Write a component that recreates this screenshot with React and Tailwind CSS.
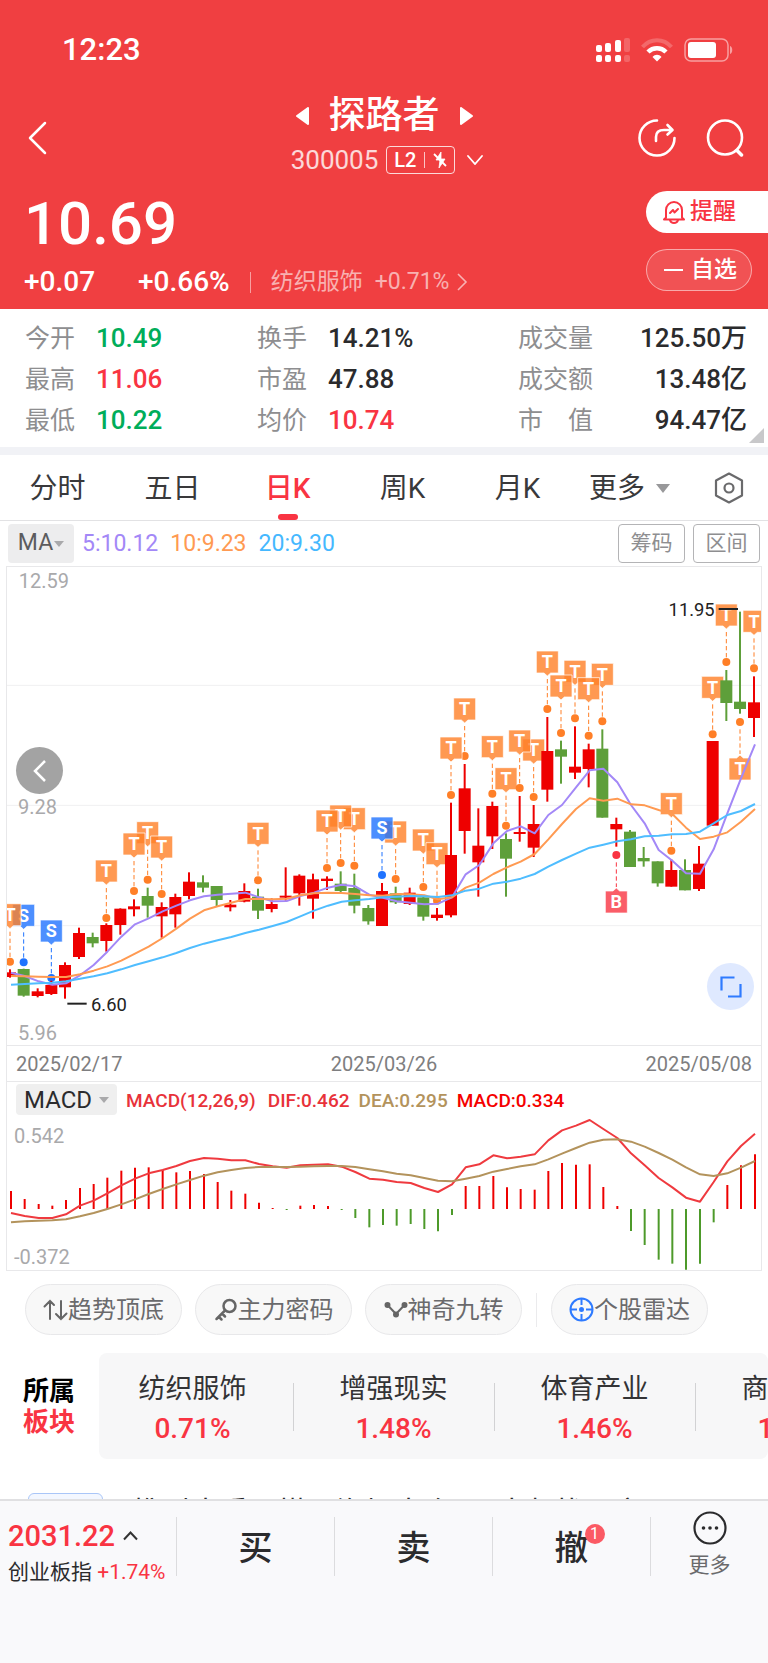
import { useState } from "react";

// Chart units are a third of a pixel. One candle every 41.33 units.
const STEP = 41.33;
const cx = (i) => 30 + STEP * i;

// [high, low, bodyTop, bodyBottom, up]
const CANDLES = [
  [1228, 1253, 1237, 1251, 1], [1226, 1310, 1227, 1307, 0], [1285, 1312, 1294, 1308, 1],
  [1262, 1305, 1275, 1302, 1], [1207, 1316, 1215, 1282, 1], [1103, 1197, 1119, 1191, 1],
  [1118, 1162, 1131, 1150, 0], [1090, 1175, 1095, 1143, 1], [1045, 1124, 1046, 1095, 1],
  [1018, 1069, 1039, 1048, 1], [983, 1073, 1008, 1037, 0], [1027, 1133, 1041, 1069, 1],
  [1001, 1103, 1011, 1063, 1], [937, 1018, 965, 1008, 1], [946, 997, 967, 983, 0],
  [978, 1039, 978, 1020, 0], [1020, 1054, 1034, 1042, 1], [970, 1027, 993, 1025, 1],
  [986, 1077, 1010, 1052, 0], [1015, 1057, 1032, 1047, 1], [922, 1022, 1007, 1013, 1],
  [943, 1037, 947, 1000, 1], [941, 1076, 958, 1016, 1], [949, 990, 956, 963, 1],
  [934, 998, 971, 993, 0], [941, 1060, 984, 1037, 0], [1035, 1094, 1044, 1084, 0],
  [969, 1098, 993, 1098, 1], [980, 1032, 1000, 1027, 0], [983, 1035, 998, 1032, 1],
  [1005, 1082, 1012, 1070, 0], [1044, 1082, 1064, 1074, 1], [728, 1072, 885, 1066, 1],
  [612, 881, 685, 813, 1], [745, 1010, 857, 907, 1], [725, 867, 738, 829, 1],
  [820, 1010, 837, 896, 0], [708, 845, 816, 822, 1], [735, 891, 792, 863, 1],
  [471, 725, 573, 689, 1], [542, 671, 568, 590, 0], [499, 657, 620, 638, 1],
  [551, 682, 568, 627, 1], [508, 773, 566, 773, 0], [773, 860, 792, 808, 1],
  [810, 921, 815, 921, 0], [861, 920, 894, 904, 0], [904, 980, 904, 970, 0],
  [898, 980, 930, 980, 1], [898, 991, 930, 991, 0], [858, 993, 911, 987, 1],
  [543, 797, 543, 797, 1], [330, 483, 361, 429, 0], [155, 461, 425, 447, 0],
  [349, 531, 427, 474, 1],
];

// [candle, kind, dotY, below]
const MARKERS = [
  [1, "S", 1207], [0, "T", 1205], [3, "S", 1254], [7, "T", 1074], [10, "T", 959],
  [9, "T", 993], [11, "T", 1002], [18, "T", 961], [25, "T", 917], [24, "T", 909],
  [23, "T", 924], [28, "T", 957], [27, "S", 945], [30, "T", 981], [31, "T", 1022],
  [33, "T", 588], [32, "T", 705], [35, "T", 701], [36, "T", 797], [38, "T", 711],
  [37, "T", 684], [39, "T", 447], [41, "T", 475], [40, "T", 519], [43, "T", 484],
  [42, "T", 527], [44, "B", 885, true], [48, "T", 872], [51, "T", 523],
  [52, "T", 306], [53, "T", 486, true], [54, "T", 325],
];

const MARKER_COLORS = { T: "#ff7f27", S: "#1f73ff", B: "#f93442" };

const MA5 = [
  1238, 1248, 1264, 1274, 1270, 1246, 1215, 1175, 1130, 1093, 1075, 1054, 1037, 1021, 1009,
  1004, 1001, 998, 1012, 1024, 1023, 1008, 998, 983, 974, 979, 1004, 1013, 1024, 1028, 1033,
  1031, 1012, 943, 915, 850, 813, 799, 820, 765, 735, 682, 631, 626, 667, 735, 790, 870, 902,
  940, 941, 868, 760, 655, 553,
];
const MA10 = [
  1248, 1249, 1250, 1251, 1251, 1243, 1232, 1219, 1202, 1181, 1160, 1134, 1106, 1076, 1051,
  1039, 1028, 1017, 1017, 1018, 1016, 1006, 1000, 998, 999, 1002, 1006, 1007, 1002, 1003,
  1006, 1018, 1012, 983, 968, 942, 922, 905, 882, 838, 792, 747, 715, 722, 716, 733, 736,
  750, 762, 803, 837, 830, 817, 785, 747,
];
const MA20 = [
  1274, 1272, 1270, 1268, 1264, 1256, 1249, 1240, 1228, 1215, 1204, 1192, 1179, 1164, 1151,
  1141, 1131, 1119, 1109, 1098, 1086, 1069, 1052, 1037, 1025, 1021, 1017, 1012, 1010, 1008,
  1009, 1011, 1006, 992, 986, 971, 965, 956, 942, 920, 900, 881, 863, 854, 844, 838, 829,
  827, 823, 822, 815, 790, 765, 753, 732,
];

const MACD_ZERO = 507;
const MACD_BARS = [
  453, 477, 492, 497, 480, 444, 432, 413, 392, 383, 382, 390, 397, 393, 402, 426, 452, 461,
  488, 504, 510, 497, 495, 498, 510, 534, 562, 555, 557, 552, 567, 574, 525, 438, 438, 408,
  442, 447, 449, 393, 369, 374, 373, 441, 498, 573, 615, 659, 671, 689, 671, 547, 435, 376,
  343,
];
const DIF = [
  519, 528, 534, 534, 523, 497, 482, 460, 436, 416, 400, 390, 378, 363, 354, 356, 361, 361,
  372, 379, 383, 376, 374, 373, 380, 396, 416, 419, 426, 429, 444, 456, 433, 382, 373, 346,
  355, 350, 343, 301, 271, 257, 240, 267, 294, 340, 376, 414, 442, 473, 485, 426, 364, 318,
  281,
];
const DEA = [
  547, 544, 542, 541, 538, 529, 519, 507, 493, 478, 462, 447, 433, 420, 407, 397, 390, 384,
  381, 381, 381, 380, 379, 378, 378, 381, 388, 394, 401, 406, 414, 422, 424, 416, 408, 395,
  387, 379, 373, 358, 341, 324, 308, 299, 298, 305, 320, 339, 359, 382, 403, 408, 400, 383,
  363,
];

const line = (ys) => ys.map((y, i) => `${Math.round(cx(i)) + 3},${y}`).join(" ");

function StatusBar() {
  return (
    <div className="flex h-[88px] items-center justify-between pt-3 pr-[34px] pl-[62px]">
      <span className="text-[31px] font-medium">12:23</span>
      <div className="flex items-center gap-[11px]">
        <svg width="34" height="24" viewBox="0 0 34 24" fill="#fff">
          <rect x="0" y="7" width="6" height="7" rx="2" />
          <rect x="9" y="5" width="6" height="9" rx="2" />
          <rect x="19" y="2" width="6" height="12" rx="2" />
          <rect x="28" y="0" width="6" height="14" rx="2" opacity=".2" />
          <rect x="0" y="17" width="6" height="7" rx="2" />
          <rect x="9" y="17" width="6" height="7" rx="2" />
          <rect x="19" y="17" width="6" height="7" rx="2" />
          <rect x="28" y="17" width="6" height="7" rx="2" opacity=".2" />
        </svg>
        <svg width="32" height="24" viewBox="0 0 32 24" fill="none" stroke="#fff">
          <path d="M1.5 9C9.5 0 22.500 0 30.500 9" strokeWidth="4" opacity=".22" />
          <path d="M7 14C12 9 20 9 25 14" strokeWidth="4.5" />
          <path d="M11.500 19C14 16 18 16 20.500 19L16 23.500Z" fill="#fff" stroke="none" />
        </svg>
        <svg width="50" height="24" viewBox="0 0 50 24">
          <rect x="1" y="1" width="43" height="22" rx="6" fill="none" stroke="#fff" strokeWidth="1.5" opacity=".5" />
          <rect x="4" y="4" width="28" height="16" rx="3" fill="#fff" />
          <path d="M46 8c3 1 3 7 0 8z" fill="#fff" opacity=".5" />
        </svg>
      </div>
    </div>
  );
}

function Nav() {
  return (
    <div className="grid h-[92px] grid-cols-[1fr_auto_1fr] items-center px-6 pt-[6px]">
      <button aria-label="返回" className="justify-self-start">
        <svg width="24" height="34" viewBox="0 0 24 34" fill="none" stroke="#fff" strokeWidth="2.5" strokeLinecap="round" strokeLinejoin="round">
          <path d="M21 2L6 17l15 15" />
        </svg>
      </button>
      <div className="flex flex-col items-center">
        <div className="flex h-11 items-center gap-5">
          <button aria-label="上一只">
            <svg width="13" height="18" viewBox="0 0 13 18" fill="#fff" stroke="#fff" strokeWidth="2" strokeLinejoin="round">
              <path d="M1 9L12 1v16z" />
            </svg>
          </button>
          <h1 className="text-[37px] leading-[44px] font-medium">探路者</h1>
          <button aria-label="下一只">
            <svg width="13" height="18" viewBox="0 0 13 18" fill="#fff" stroke="#fff" strokeWidth="2" strokeLinejoin="round">
              <path d="M12 9L1 1v16z" />
            </svg>
          </button>
        </div>
        <div className="flex h-11 items-center pl-[6px]">
          <span className="text-[26px] text-white/80">300005</span>
          <span className="ml-2 flex h-7 w-[69px] items-center justify-center gap-2 rounded border border-white/80 text-[20px] font-medium">
            L2
            <span className="h-4 w-px bg-white/70" />
            <svg width="14" height="18" viewBox="0 0 14 18" fill="none" stroke="#fff" strokeWidth="1.8" strokeLinejoin="round">
              <path d="M8 1L3 9h4l-1 8 6-9H8z" fill="#fff" strokeWidth=".8" />
              <path d="M1 3l12 12" />
            </svg>
          </span>
          <svg className="ml-3" width="16" height="10" viewBox="0 0 16 10" fill="none" stroke="#fff" strokeWidth="1.8" strokeLinecap="round">
            <path d="M1 1l7 8 7-8" />
          </svg>
        </div>
      </div>
      <div className="flex items-center gap-[30px] justify-self-end">
        <button aria-label="分享">
          <svg width="38" height="38" viewBox="0 0 38 38" fill="none" stroke="#fff" strokeWidth="2.6" strokeLinecap="round" strokeLinejoin="round">
            <path d="M19 1.500A17.500 17.500 0 1 0 36.500 19" />
            <path d="M18 22v-4c0-5 3-7 8-7h7M29.500 6l5 5-5 4.500" />
          </svg>
        </button>
        <button aria-label="搜索">
          <svg width="38" height="38" viewBox="0 0 38 38" fill="none" stroke="#fff" strokeWidth="2.6" strokeLinecap="round">
            <circle cx="19" cy="18.5" r="17" />
            <path d="M31 31.500L35.500 36" strokeWidth="3.5" />
          </svg>
        </button>
      </div>
    </div>
  );
}

function PriceBlock() {
  return (
    <div className="flex justify-between pb-[9px] pl-6">
      <div>
        <div className="flex h-[84px] items-center pt-1 text-[60px] font-medium">10.69</div>
        <div className="flex h-9 items-center">
          <span className="w-[114px] text-[28px] font-medium">+0.07</span>
          <span className="text-[28px] font-medium">+0.66%</span>
          <span className="mx-5 h-[21px] w-px bg-white/50" />
          <a href="#sector" className="flex items-center text-[23px] text-white/60">
            纺织服饰
            <span className="ml-3">+0.71%</span>
            <svg className="ml-2" width="11" height="18" viewBox="0 0 11 18" fill="none" stroke="#fff" strokeOpacity=".6" strokeWidth="1.6">
              <path d="M1 1l8 8-8 8" />
            </svg>
          </a>
        </div>
      </div>
      <div className="flex flex-col gap-4 pt-[11px]">
        <button className="flex h-[42px] w-[122px] items-center gap-1 rounded-l-full bg-white pl-4 text-[23px] font-medium text-[#f93442]">
          <svg width="24" height="26" viewBox="0 0 24 26" fill="none" stroke="#f93442" strokeWidth="2" strokeLinejoin="round" strokeLinecap="round">
            <path d="M4 18.500V11a8 8 0 0 1 16 0v7.500l2 2H2z" />
            <path d="M8 21c1 4 7 4 8 0" />
            <path d="M8 14l3-3 1.500 2.500L16 10" />
          </svg>
          提醒
        </button>
        <button className="flex h-[42px] w-[106px] items-center gap-2 rounded-full border border-white/50 bg-white/10 pl-[17px] text-[23px] font-medium">
          <span className="h-0.5 w-[19px] bg-white" />
          自选
        </button>
      </div>
    </div>
  );
}

const STATS = [
  ["今开", "10.49", "text-[#00ad5a]"],
  ["换手", "14.21%", "text-[#2b2b2d]"],
  ["成交量", "125.50万", "text-[#2b2b2d]"],
  ["最高", "11.06", "text-[#f93442]"],
  ["市盈", "47.88", "text-[#2b2b2d]"],
  ["成交额", "13.48亿", "text-[#2b2b2d]"],
  ["最低", "10.22", "text-[#00ad5a]"],
  ["均价", "10.74", "text-[#f93442]"],
  ["市　值", "94.47亿", "text-[#2b2b2d]"],
];

function Stats() {
  return (
    <dl className="relative grid grid-cols-[232px_1fr_229px] pt-[9px] pr-[21px] pb-[6px] pl-[25px] leading-[41px]">
      {STATS.map(([label, value, color], i) => (
        <div key={label} className={i % 3 === 2 ? "flex justify-between" : "flex gap-[21px]"}>
          <dt className="text-[25px] text-[#8e8e90]">{label}</dt>
          <dd className={`text-[26px] font-medium ${color}`}>{value}</dd>
        </div>
      ))}
      <span className="absolute right-1 bottom-1 border-b-[15px] border-l-[15px] border-b-[#c8c8ca] border-l-transparent" />
    </dl>
  );
}

function Tabs() {
  const [active, setActive] = useState("日K");
  return (
    <nav className="grid h-[66px] grid-cols-[repeat(6,115fr)_78fr] border-b border-[#e2e2e4] text-[28px] text-[#39393b]">
      {["分时", "五日", "日K", "周K", "月K", "更多"].map((tab) => (
        <button
          key={tab}
          onClick={() => setActive(tab)}
          className={`relative flex items-center justify-center pt-0.5 ${
            active === tab ? "font-medium text-[#f93442]" : ""
          }`}
        >
          {tab}
          {tab === "更多" && (
            <span className="mr-[6px] ml-[11px] border-x-[7px] border-t-[9px] border-x-transparent border-t-[#98989a]" />
          )}
          {active === tab && (
            <span className="absolute bottom-0 left-1/2 h-1.5 w-5 -translate-x-1/2 rounded-sm bg-[#f93442]" />
          )}
        </button>
      ))}
      <button aria-label="设置" className="flex items-center justify-center">
        <svg width="30" height="32" viewBox="0 0 30 32" fill="none" stroke="#6a6a6c" strokeWidth="2.2" strokeLinejoin="round">
          <path d="M15 1.500L28 8.500v15L15 30.500 2 23.500v-15z" />
          <circle cx="15" cy="16" r="4.5" />
        </svg>
      </button>
    </nav>
  );
}

function Caret() {
  return <span className="border-x-[5px] border-t-[6px] border-x-transparent border-t-[#a9a9ab]" />;
}

function MaBar() {
  return (
    <div className="flex h-[45px] items-center px-2 text-[23px]">
      <button className="flex h-[39px] w-[66px] items-center justify-center gap-px rounded bg-[#ededee] text-[#5c5c5e]">
        MA
        <Caret />
      </button>
      <span className="ml-2 pt-0.5 text-[#a388f7]">5:10.12</span>
      <span className="ml-3 pt-0.5 text-[#ff9a52]">10:9.23</span>
      <span className="ml-3 pt-0.5 text-[#45b8ff]">20:9.30</span>
      <div className="ml-auto flex gap-2 text-[21px] text-[#8e8e90]">
        <button className="h-[39px] w-[67px] rounded border border-[#b4b4b6]">筹码</button>
        <button className="h-[39px] w-[67px] rounded border border-[#b4b4b6]">区间</button>
      </div>
    </div>
  );
}

function Marker({ i, kind, dot, below }) {
  const x = Math.round(cx(i));
  const color = MARKER_COLORS[kind];
  const top = below ? dot + 108 : dot - 174;
  const shape = below
    ? `M${x - 33} ${top}h23l10 -9l10 9h23v66h-66z`
    : `M${x - 33} ${top}h66v66h-23l-10 9l-10 -9h-23z`;
  return (
    <g>
      <line
        x1={x}
        x2={x}
        y1={below ? dot + 22 : top + 84}
        y2={below ? top - 12 : dot - 12}
        stroke={color}
        strokeWidth="3"
        strokeDasharray="13 8"
      />
      <circle cx={x} cy={dot} r="12" fill={color} />
      <path d={shape} fill={color} fillOpacity=".8" stroke="#fff" strokeOpacity=".7" strokeWidth="3" />
      <text x={x} y={top + 52} textAnchor="middle" fontSize="54" fontWeight="700" fill="#fff">
        {kind}
      </text>
    </g>
  );
}

function KChart() {
  return (
    <div className="relative">
      <svg className="block w-full" viewBox="21 21 2262 1434">
        {[376, 736, 1097].map((y) => (
          <line key={y} x1="21" x2="2283" y1={y} y2={y} stroke="#f0f0f1" strokeWidth="3" />
        ))}
        <g fontSize="60" fill="#a9a9ab">
          <text x="56" y="84">12.59</text>
          <text x="54" y="762">9.28</text>
          <text x="54" y="1439">5.96</text>
        </g>
        {MARKERS.map(([i, kind, dot, below]) => (
          <Marker key={i} i={i} kind={kind} dot={dot} below={below} />
        ))}
        {CANDLES.map(([high, low, top, bottom, up], i) => {
          const x = Math.round(cx(i));
          return (
            <g key={i} fill={up ? "#ee0000" : "#5e9f3a"}>
              <rect x={x - 3} y={high} width="6" height={low - high} />
              <rect x={x - 18} y={top} width="36" height={bottom - top} />
            </g>
          );
        })}
        <g fill="none" strokeWidth="6" strokeLinejoin="round">
          <polyline points={line(MA5)} stroke="#a388f7" />
          <polyline points={line(MA10)} stroke="#ff9a52" />
          <polyline points={line(MA20)} stroke="#4fbdff" />
        </g>
        <g stroke="#222" strokeWidth="6">
          <line x1="202" x2="260" y1="1331" y2="1331" />
          <line x1="2156" x2="2214" y1="147" y2="147" />
        </g>
        <g fontSize="55" fill="#222">
          <text x="273" y="1353">6.60</text>
          <text x="2144" y="169" textAnchor="end">11.95</text>
        </g>
      </svg>
      <button
        aria-label="更早"
        className="absolute top-[180px] left-[9px] flex size-[47px] items-center justify-center rounded-full bg-[#a3a3a3]"
      >
        <svg width="14" height="22" viewBox="0 0 14 22" fill="none" stroke="#fff" strokeWidth="2.5">
          <path d="M12 1L2 11l10 10" />
        </svg>
      </button>
      <button
        aria-label="全屏"
        className="absolute right-[7px] bottom-[35px] flex size-[47px] items-center justify-center rounded-full bg-[#dfe9ff]"
      >
        <svg width="22" height="22" viewBox="0 0 22 22" fill="none" stroke="#2f7bff" strokeWidth="2.2">
          <path d="M1.500 14.500v-13h13M20.500 8v12.500H8" />
        </svg>
      </button>
    </div>
  );
}

function MacdChart() {
  return (
    <>
      <div className="flex h-9 items-center border-t border-[#e8e8ea] pl-[9px] text-[19px] font-medium">
        <button className="mr-[9px] flex h-[31px] w-[101px] items-center justify-center gap-[7px] rounded bg-[#efefef] text-[24px] font-normal text-[#2b2b2d]">
          MACD
          <Caret />
        </button>
        <span className="pt-1 text-[#e8323a]">MACD(12,26,9)</span>
        <span className="ml-3 pt-1 text-[#e8323a]">DIF:0.462</span>
        <span className="ml-[9px] pt-1 text-[#b3935c]">DEA:0.295</span>
        <span className="ml-[9px] pt-1 text-[#f50000]">MACD:0.334</span>
      </div>
      <svg className="block w-full" viewBox="21 231 2262 459">
        <g fontSize="60" fill="#a9a9ab">
          <text x="42" y="308">0.542</text>
          <text x="42" y="671">-0.372</text>
        </g>
        {MACD_BARS.map((y, i) => (
          <line
            key={i}
            x1={Math.round(cx(i)) + 3}
            x2={Math.round(cx(i)) + 3}
            y1={MACD_ZERO}
            y2={y}
            stroke={y < MACD_ZERO ? "#ee0000" : "#4d9a2a"}
            strokeWidth="6"
          />
        ))}
        <g fill="none" strokeWidth="6" strokeLinejoin="round">
          <polyline points={line(DIF)} stroke="#ef3a3f" />
          <polyline points={line(DEA)} stroke="#b3935c" />
        </g>
      </svg>
    </>
  );
}

const PILL = "flex h-[51px] w-[157px] items-center justify-center rounded-full border border-[#e8e8ea] bg-[#f8f8f8]";

function Tools() {
  return (
    <div className="flex items-center gap-[13px] pt-[13px] pb-[18px] pl-[25px] text-[24px] text-[#6a6a6c]">
      <button className={PILL}>
        <svg width="25" height="24" viewBox="0 0 25 24" fill="none" stroke="#666" strokeWidth="2" strokeLinecap="round">
          <path d="M7 21V3M1.500 8.500L7 3l4 4M18 3v18M13 16l5 5 5.500-5.500" />
        </svg>
        趋势顶底
      </button>
      <button className={PILL}>
        <svg width="24" height="24" viewBox="0 0 24 24" fill="none" stroke="#666" strokeWidth="2.5" strokeLinecap="round">
          <circle cx="15.5" cy="8" r="6" />
          <path d="M11 12.500L2.500 21M8.500 16l2.500 2.500M5 19l2.500 2.500" />
        </svg>
        主力密码
      </button>
      <button className={PILL}>
        <svg width="24" height="24" viewBox="0 0 24 24" fill="#666" stroke="#666" strokeWidth="2">
          <path d="M3.500 7L12 16l8.500-9" fill="none" />
          <circle cx="3.5" cy="7" r="2" />
          <circle cx="12" cy="16.5" r="2" />
          <circle cx="20.5" cy="7" r="2" />
        </svg>
        神奇九转
      </button>
      <span className="mx-px h-[34px] w-px bg-[#ebebed]" />
      <button className={PILL}>
        <svg width="25" height="25" viewBox="0 0 25 25" fill="none" stroke="#2f7bff" strokeWidth="2">
          <circle cx="12.5" cy="12.5" r="11" />
          <path d="M12.500 1v7M12.500 17v7M1 12.500h7M17 12.500h7" />
          <circle cx="12.5" cy="12.5" r="1.5" fill="#2f7bff" />
        </svg>
        个股雷达
      </button>
    </div>
  );
}

const SECTORS = [
  ["纺织服饰", "0.71%"],
  ["增强现实", "1.48%"],
  ["体育产业", "1.46%"],
  ["商业百货", "1.35%"],
];

function Sectors() {
  return (
    <section id="sector" className="flex">
      <h2 className="flex w-[99px] shrink-0 flex-col justify-center pt-0.5 pl-[23px] text-[26px] leading-[31px] font-bold text-black">
        所属<span className="text-[#f93442]">板块</span>
      </h2>
      <ul className="flex h-[106px] min-w-0 flex-1 items-center overflow-hidden rounded-lg bg-[#f7f7f8] pt-[6px]">
        {SECTORS.map(([name, pct], i) => (
          <li
            key={name}
            className={`relative shrink-0 text-center text-[#333335] ${i === 0 ? "w-[195px] pr-2" : "w-[201px] pr-0.5"}`}
          >
            <div className="text-[27px] leading-10">{name}</div>
            <div className="text-[28px] leading-10 font-medium text-[#f93442]">{pct}</div>
            {i < 3 && <span className="absolute top-[14px] right-0 h-12 w-px bg-[#d2d2d4]" />}
          </li>
        ))}
      </ul>
    </section>
  );
}

function NewsRow() {
  return (
    <div className="flex h-10 items-start overflow-hidden pt-[34px] pl-7">
      <span className="h-10 w-[75px] rounded-md border border-[#a9c6f8] bg-[#f3f7ff]" />
      <p className="ml-[30px] text-[29px] leading-10 text-[#2b2b2d]">携引大重要搭，海坦大会——大邮找一方</p>
    </div>
  );
}

function BottomBar() {
  return (
    <footer className="h-[164px] border-t-2 border-[#e0e0e2] bg-[#f9f9fb]">
      <div className="grid grid-cols-[177fr_158fr_158fr_158fr_117fr] pt-4 text-[#2b2b2d]">
        <div className="flex h-[59px] flex-col border-r border-[#dcdcde] pl-2 whitespace-nowrap">
          <div className="flex items-center gap-2 text-[29px] leading-[38px] font-medium text-[#f93442]">
            2031.22
            <svg width="15" height="10" viewBox="0 0 15 10" fill="none" stroke="#333" strokeWidth="2">
              <path d="M1 8.500L7.500 1.500 14 8.500" />
            </svg>
          </div>
          <div className="text-[21px] leading-[34px]">
            创业板指 <span className="text-[#f93442]">+1.74%</span>
          </div>
        </div>
        <button className="h-[59px] border-r border-[#dcdcde] pt-1 text-[34px] font-medium">买</button>
        <button className="h-[59px] border-r border-[#dcdcde] pt-1 text-[34px] font-medium">卖</button>
        <button className="h-[59px] border-r border-[#dcdcde] pt-1 text-[34px] font-medium">
          <span className="relative">
            撤
            <span className="absolute -top-1 -right-4 flex size-5 items-center justify-center rounded-full bg-[#fb5a64] text-[16px] font-normal text-white">
              1
            </span>
          </span>
        </button>
        <button className="-mt-[6px] flex flex-col items-center text-[21px] leading-10 text-[#6a6a6c]">
          <svg width="34" height="34" viewBox="0 0 34 34" fill="#2b2b2d">
            <circle cx="17" cy="17" r="15.5" fill="none" stroke="#2b2b2d" strokeWidth="2.2" />
            <circle cx="10.5" cy="17" r="1.8" />
            <circle cx="17" cy="17" r="1.8" />
            <circle cx="23.5" cy="17" r="1.8" />
          </svg>
          更多
        </button>
      </div>
    </footer>
  );
}

export default function App() {
  return (
    <div className="bg-white font-['Roboto','Noto_Sans_CJK_SC',sans-serif]">
      <header className="bg-[#f03f41] text-white">
        <StatusBar />
        <Nav />
        <PriceBlock />
      </header>
      <Stats />
      <div className="h-2 bg-[#f1f2f6]" />
      <Tabs />
      <MaBar />
      <section className="mx-[6px] border border-[#e8e8ea]">
        <KChart />
        <div className="flex h-9 items-center justify-between border-t border-[#e8e8ea] px-[9px] text-[20px] text-[#7e7e80]">
          <span>2025/02/17</span>
          <span>2025/03/26</span>
          <span>2025/05/08</span>
        </div>
        <MacdChart />
      </section>
      <Tools />
      <Sectors />
      <NewsRow />
      <BottomBar />
    </div>
  );
}
